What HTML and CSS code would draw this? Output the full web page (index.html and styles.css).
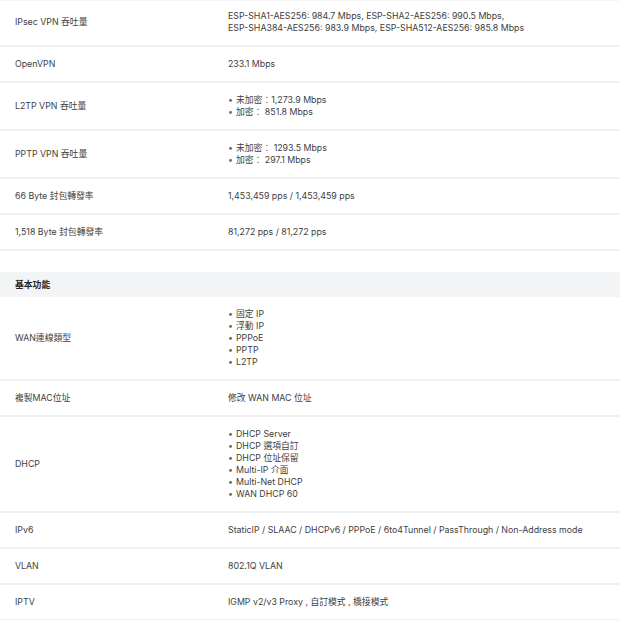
FILE: index.html
```html
<!DOCTYPE html>
<html lang="zh-Hant">
<head>
<meta charset="utf-8">
<link rel="stylesheet" href="styles.css">
</head>
<body>
<div class="spec">
  <div class="row top">
    <div class="label">IPsec VPN 吞吐量</div>
    <div class="value">ESP-SHA1-AES256: 984.7 Mbps, ESP-SHA2-AES256: 990.5 Mbps,<br>ESP-SHA384-AES256: 983.9 Mbps, ESP-SHA512-AES256: 985.8 Mbps</div>
  </div>
  <div class="row">
    <div class="label">OpenVPN</div>
    <div class="value">233.1 Mbps</div>
  </div>
  <div class="row">
    <div class="label">L2TP VPN 吞吐量</div>
    <ul class="value list">
      <li>未加密：1,273.9 Mbps</li>
      <li>加密： 851.8 Mbps</li>
    </ul>
  </div>
  <div class="row">
    <div class="label">PPTP VPN 吞吐量</div>
    <ul class="value list">
      <li>未加密： 1293.5 Mbps</li>
      <li>加密： 297.1 Mbps</li>
    </ul>
  </div>
  <div class="row">
    <div class="label">66 Byte 封包轉發率</div>
    <div class="value">1,453,459 pps / 1,453,459 pps</div>
  </div>
  <div class="row">
    <div class="label">1,518 Byte 封包轉發率</div>
    <div class="value">81,272 pps / 81,272 pps</div>
  </div>

  <div class="section">基本功能</div>

  <div class="row">
    <div class="label">WAN連線類型</div>
    <ul class="value list">
      <li>固定 IP</li>
      <li>浮動 IP</li>
      <li>PPPoE</li>
      <li>PPTP</li>
      <li>L2TP</li>
    </ul>
  </div>
  <div class="row">
    <div class="label">複製MAC位址</div>
    <div class="value">修改 WAN MAC 位址</div>
  </div>
  <div class="row">
    <div class="label">DHCP</div>
    <ul class="value list">
      <li>DHCP Server</li>
      <li>DHCP 選項自訂</li>
      <li>DHCP 位址保留</li>
      <li>Multi-IP 介面</li>
      <li>Multi-Net DHCP</li>
      <li>WAN DHCP 60</li>
    </ul>
  </div>
  <div class="row">
    <div class="label">IPv6</div>
    <div class="value">StaticIP / SLAAC / DHCPv6 / PPPoE / 6to4Tunnel / PassThrough / Non-Address mode</div>
  </div>
  <div class="row">
    <div class="label">VLAN</div>
    <div class="value">802.1Q VLAN</div>
  </div>
  <div class="row">
    <div class="label">IPTV</div>
    <div class="value">IGMP v2/v3 Proxy , 自訂模式 , 橋接模式</div>
  </div>
</div>
</body>
</html>
```

FILE: styles.css
```css
html, body {
  margin: 0;
  padding: 0;
  background: #ffffff;
}

body {
  font-family: Inter, "Noto Sans CJK TC", sans-serif;
  font-size: 8.8px;
  line-height: 12px;
  color: #404040;
}

.spec {
  display: flex;
  flex-direction: column;
}

.row {
  display: grid;
  grid-template-columns: 213px 1fr;
  align-items: center;
  padding: 11px 0 11px 15px;
  border-bottom: 2px solid #f1f1f1;
}

.row.top {
  padding-top: 10px;
  box-shadow: inset 0 1px 0 #f6f6f6;
}

.label,
.value {
  margin: 0;
}

.list {
  list-style: none;
  padding: 0;
}

.list li::before {
  content: "•";
  display: inline-block;
  width: 8px;
  text-align: left;
  color: #666;
}

.section {
  margin-top: 21px;
  background: #f3f4f6;
  padding: 7px 15px 6px;
  font-weight: 700;
  color: #222;
  line-height: 12px;
}
```
